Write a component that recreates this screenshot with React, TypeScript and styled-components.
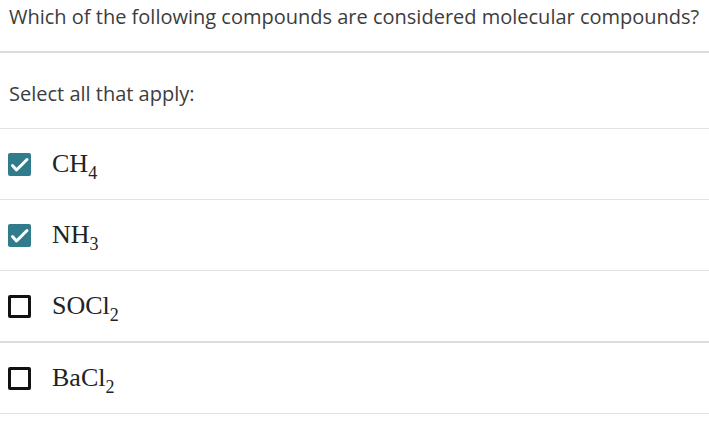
import React, { useState } from "react";
import styled, { createGlobalStyle } from "styled-components";

const GlobalStyle = createGlobalStyle`
  body {
    margin: 0;
    background: #fff;
    font-family: "Open Sans", "Liberation Sans", sans-serif;
    color: #3d3d3d;
  }
`;

type Choice = {
  id: string;
  main: string;
  sub: string;
  checked: boolean;
  thick?: boolean;
};

const initialChoices: Choice[] = [
  { id: "ch4", main: "CH", sub: "4", checked: true },
  { id: "nh3", main: "NH", sub: "3", checked: true },
  { id: "socl2", main: "SOCl", sub: "2", checked: false, thick: true },
  { id: "bacl2", main: "BaCl", sub: "2", checked: false },
];

const Page = styled.div`
  width: 709px;
`;

const Question = styled.div`
  height: 53px;
  box-sizing: border-box;
  padding: 0 9px;
  border-bottom: 2px solid #dcdcdc;
  font-size: 20px;
  line-height: 34px;
  white-space: nowrap;
`;

const Prompt = styled.div`
  height: 76px;
  box-sizing: border-box;
  padding: 24px 9px 0;
  border-bottom: 1px solid #e2e2e2;
  font-size: 20px;
  line-height: 34px;
`;

const List = styled.ul`
  list-style: none;
  margin: 0;
  padding: 0;
`;

const Row = styled.li<{ $thick?: boolean }>`
  height: 70px;
  display: flex;
  align-items: center;
  gap: 21px;
  padding-left: 8px;
  border-bottom: ${(p) => (p.$thick ? "2px solid #dcdcdc" : "1px solid #e2e2e2")};
  cursor: pointer;
`;

const Box = styled.span<{ $checked: boolean }>`
  width: 23px;
  height: 23px;
  box-sizing: border-box;
  border-radius: 2px;
  display: flex;
  align-items: center;
  justify-content: center;
  background: ${(p) => (p.$checked ? "#317c8c" : "#fff")};
  border: ${(p) => (p.$checked ? "none" : "3px solid #111")};
`;

const Formula = styled.span`
  display: block;
  font-family: "Liberation Serif", "DejaVu Serif", serif;
  font-size: 26px;
  line-height: 26px;
  color: #222;
  sub {
    font-size: 18px;
    line-height: 0;
    vertical-align: -7px;
  }
`;

const Check = () => (
  <svg width="23" height="23" viewBox="0 0 23 23">
    <path
      d="M4.5 12.5 L8.5 17 L19 6.5"
      fill="none"
      stroke="#fff"
      strokeWidth="3"
      strokeLinecap="round"
      strokeLinejoin="round"
    />
  </svg>
);

export default function App() {
  const [choices, setChoices] = useState(initialChoices);

  const toggle = (id: string) =>
    setChoices((list) =>
      list.map((c) => (c.id === id ? { ...c, checked: !c.checked } : c))
    );

  return (
    <Page>
      <GlobalStyle />
      <Question>
        Which of the following compounds are considered molecular compounds?
      </Question>
      <Prompt>Select all that apply:</Prompt>
      <List>
        {choices.map((c) => (
          <Row key={c.id} $thick={c.thick} onClick={() => toggle(c.id)}>
            <Box $checked={c.checked}>{c.checked && <Check />}</Box>
            <Formula>
              {c.main}
              <sub>{c.sub}</sub>
            </Formula>
          </Row>
        ))}
      </List>
    </Page>
  );
}
